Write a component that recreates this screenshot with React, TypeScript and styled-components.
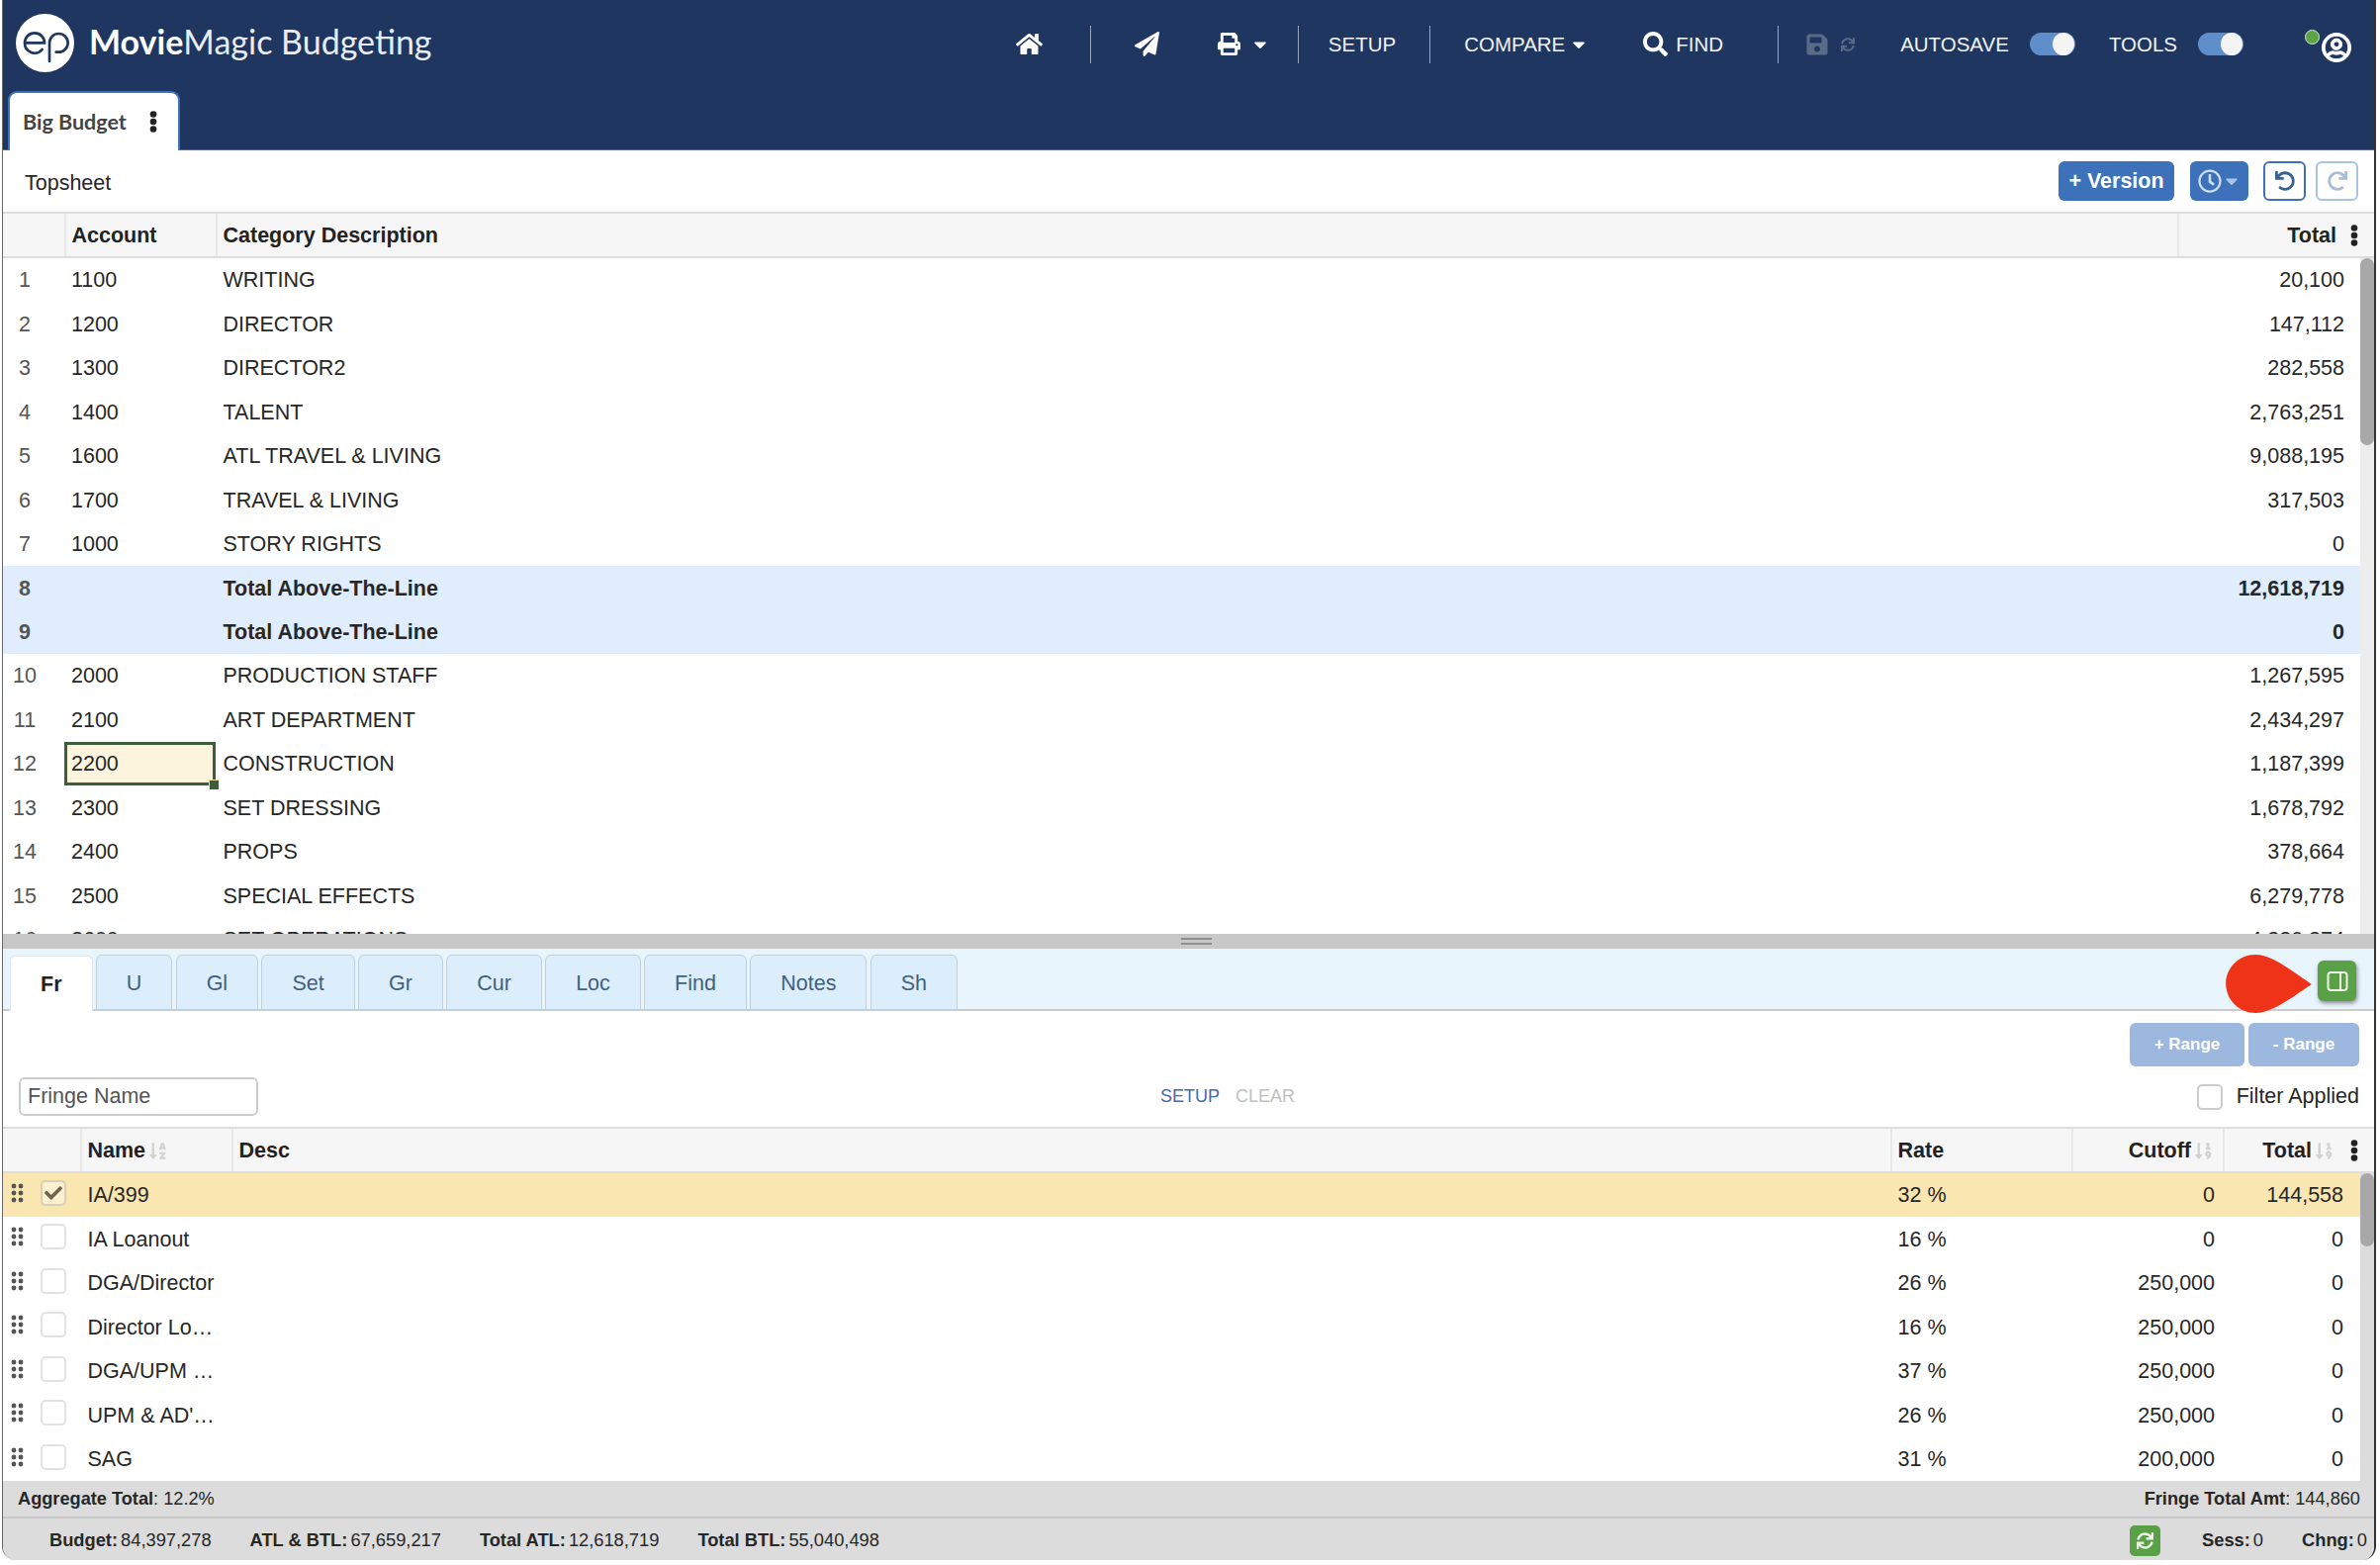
import React from "react"
import styled, { createGlobalStyle } from "styled-components"
import {
  FaCaretDown,
  FaCheck,
  FaHome,
  FaPaperPlane,
  FaPrint,
  FaRedo,
  FaRegClock,
  FaRegUserCircle,
  FaSave,
  FaSearch,
  FaSortAlphaDown,
  FaSortNumericDown,
  FaSync,
  FaUndo,
} from "react-icons/fa"

const GlobalStyle = createGlobalStyle`
  html, body {
    margin: 0;
    padding: 0;
    background: #fff;
    overflow: hidden;
  }
  * {
    box-sizing: border-box;
  }
  body {
    font-family: "Liberation Sans", Arial, sans-serif;
    font-size: 21.5px;
    color: #272727;
  }
`

const Frame = styled.div`
  display: flex;
  flex-direction: column;
  width: 2400px;
  height: 1577px;
  margin-left: 2px;
  border-left: 1px solid #666;
  border-right: 2px solid #333;
  border-radius: 0 0 14px 14px;
  overflow: hidden;
`

const Header = styled.header`
  display: flex;
  flex-direction: column;
  height: 152px;
  flex: none;
  background: #1f3660;
  border-bottom: 1px solid #4d6a96;
`

const TopRow = styled.div`
  display: flex;
  align-items: center;
  height: 91px;
  padding: 0 23px 2px 13px;
  color: #fff;
`

const LogoMark = styled.svg`
  width: 59px;
  height: 59px;
  flex: none;
  margin-bottom: 2px;
`

const Wordmark = styled.div`
  margin: 0 0 6px 15px;
  font-family: Lato, sans-serif;
  font-size: 34px;
  color: #e9edf3;
  b {
    font-weight: 700;
    color: #fff;
  }
`

const Nav = styled.nav`
  display: flex;
  align-items: center;
  margin-left: auto;
`

const NavIcon = styled.span<{ $ml: number; $size: number; $dim?: boolean }>`
  display: flex;
  margin-left: ${(p) => p.$ml}px;
  font-size: ${(p) => p.$size}px;
  color: ${(p) => (p.$dim ? "#5a6b88" : "#fff")};
`

const NavText = styled.span<{ $ml: number }>`
  margin-left: ${(p) => p.$ml}px;
  font-size: 20.5px;
  color: #f1f3f6;
`

const NavSep = styled.span<{ $ml: number }>`
  width: 1px;
  height: 38px;
  margin-left: ${(p) => p.$ml}px;
  background: #9aa6ba;
`

const Toggle = styled.span<{ $ml: number }>`
  display: flex;
  justify-content: flex-end;
  width: 46px;
  height: 23px;
  margin-left: ${(p) => p.$ml}px;
  padding: 0 1px;
  border-radius: 12px;
  background: #5f8fcb;
  &::after {
    content: "";
    width: 22px;
    height: 23px;
    border-radius: 50%;
    background: #f4f4f4;
  }
`

const StatusDot = styled.span`
  width: 15px;
  height: 15px;
  margin: -14px 0 0 62px;
  border-radius: 50%;
  background: #5aa447;
  border: 1px solid #d8e6d4;
`

const Avatar = styled.span`
  display: flex;
  margin: 6px 0 0 2px;
  font-size: 30px;
  color: #fff;
  svg {
    stroke: #fff;
    stroke-width: 16;
  }
`

const TabRow = styled.div`
  display: flex;
  flex: 1;
  align-items: flex-end;
  padding-left: 5px;
`

const BudgetTab = styled.div`
  display: flex;
  align-items: center;
  width: 174px;
  height: 60px;
  padding: 0 21px 0 13px;
  justify-content: space-between;
  margin-bottom: -1px;
  background: #fff;
  border: 2px solid #3d72ba;
  border-bottom: 0;
  border-radius: 9px 9px 0 0;
  font-family: Lato, sans-serif;
  font-size: 21.5px;
  font-weight: 700;
  color: #444;
`

const Dots = styled.svg`
  width: 8px;
  height: 22px;
  flex: none;
  fill: #222;
`

const Kebab = () => (
  <Dots viewBox="0 0 8 22">
    <circle cx="4" cy="3.5" r="3.3" />
    <circle cx="4" cy="11" r="3.3" />
    <circle cx="4" cy="18.5" r="3.3" />
  </Dots>
)

const TitleBar = styled.div`
  display: flex;
  align-items: center;
  height: 62px;
  flex: none;
  padding: 0 16px 0 22px;
`

const TitleText = styled.span`
  margin-top: 5px;
  margin-right: auto;
`

const SolidButton = styled.span<{ $width: number; $ml?: number }>`
  display: flex;
  align-items: center;
  justify-content: center;
  width: ${(p) => p.$width}px;
  height: 40px;
  margin-left: ${(p) => p.$ml || 0}px;
  border-radius: 6px;
  background: #3d72ba;
  color: #fff;
  font-weight: 700;
  font-size: 21.5px;
`

const CaretSoft = styled.span`
  display: flex;
  font-size: 20px;
  color: #a9c4e6;
`

const OutlineButton = styled.span<{ $faded?: boolean; $ml: number }>`
  display: flex;
  align-items: center;
  justify-content: center;
  width: 43px;
  height: 40px;
  margin-left: ${(p) => p.$ml}px;
  border: 2px solid ${(p) => (p.$faded ? "#a7c3e5" : "#3d72ba")};
  border-radius: 6px;
  font-size: 20px;
  color: ${(p) => (p.$faded ? "#a9bdd4" : "#3a6290")};
`

const HeadRow = styled.div<{ $cols: string }>`
  display: grid;
  grid-template-columns: ${(p) => p.$cols};
  height: 47px;
  flex: none;
  background: #f6f6f6;
  border-top: 2px solid #ddd;
  border-bottom: 2px solid #ddd;
  font-weight: 700;
  color: #222;
`

const HeadCell = styled.div<{ $end?: boolean; $pr?: number }>`
  display: flex;
  align-items: center;
  justify-content: ${(p) => (p.$end ? "flex-end" : "flex-start")};
  padding: 2px ${(p) => p.$pr || 0}px 0 ${(p) => (p.$end ? 0 : 5.5)}px;
  border-left: 2px solid #e8e8e8;
  &:first-child {
    border-left: 0;
  }
`

const SortIcon = styled.span`
  display: flex;
  margin-left: 3px;
  font-size: 19px;
  color: #d2d2d2;
`

const KebabGap = styled.span<{ $ml: number }>`
  display: flex;
  margin: -2px 0 0 ${(p) => p.$ml}px;
`

const GridBody = styled.div<{ $height: number }>`
  display: flex;
  height: ${(p) => p.$height}px;
  flex: none;
  overflow: hidden;
`

const Rows = styled.div`
  flex: 1;
  min-width: 0;
`

const ScrollTrack = styled.div<{ $bg: string }>`
  width: 14px;
  flex: none;
  background: ${(p) => p.$bg};
`

const ScrollThumb = styled.div<{ $height: number }>`
  height: ${(p) => p.$height}px;
  border-radius: 7px;
  background: #a8a8a8;
`

const TopRowGrid = styled.div<{ $total?: boolean }>`
  display: grid;
  grid-template-columns: 62px 153px 1fr 183px;
  align-items: center;
  height: 44.44px;
  padding-top: 1.5px;
  background: ${(p) => (p.$total ? "#e0edfc" : "#fff")};
  font-weight: ${(p) => (p.$total ? 700 : 400)};
`

const IndexCell = styled.div`
  padding-right: 18px;
  text-align: center;
  color: #555;
`

const AccountCell = styled.div<{ $selected?: boolean }>`
  position: relative;
  display: flex;
  align-items: center;
  height: 44px;
  margin-top: -1.5px;
  padding: 1.5px 0 0 ${(p) => (p.$selected ? 4 : 7)}px;
  background: ${(p) => (p.$selected ? "#fdf4dd" : "transparent")};
  border: ${(p) => (p.$selected ? "3px solid #3b5f3b" : "0")};
`

const FillHandle = styled.span`
  position: absolute;
  right: -6px;
  bottom: -7px;
  width: 10px;
  height: 10px;
  background: #3b5f3b;
  border-left: 1px solid #f3dca0;
  border-top: 1px solid #f3dca0;
`

const TextCell = styled.div`
  padding-left: 7.5px;
`

const AmountCell = styled.div<{ $pr: number }>`
  padding-right: ${(p) => p.$pr}px;
  text-align: right;
`

const Splitter = styled.div`
  display: flex;
  flex-direction: column;
  align-items: center;
  gap: 3px;
  height: 15px;
  flex: none;
  padding: 4px 0 0 16px;
  background: #c8c8c8;
  &::before,
  &::after {
    content: "";
    width: 31px;
    height: 2px;
    background: #8f8f8f;
  }
`

const TabBar = styled.div`
  position: relative;
  display: flex;
  align-items: flex-end;
  gap: 3.3px;
  height: 63px;
  flex: none;
  padding: 0 18px 0 7px;
  background: #e9f5fc;
  border-bottom: 2px solid #ccc;
`

const PanelTab = styled.div<{ $active?: boolean }>`
  display: flex;
  align-items: center;
  height: 56px;
  margin-bottom: ${(p) => (p.$active ? -2 : -1)}px;
  padding: 2px 30px 0;
  background: ${(p) => (p.$active ? "#fff" : "#dceefc")};
  border: 1px solid ${(p) => (p.$active ? "#dfe8ee" : "#bcd0e0")};
  border-bottom: ${(p) => (p.$active ? "0" : "1px solid #bcd0e0")};
  border-radius: 6px 6px 0 0;
  font-weight: ${(p) => (p.$active ? 700 : 400)};
  color: ${(p) => (p.$active ? "#222" : "#41617f")};
`

const PanelToggle = styled.span`
  display: flex;
  align-items: center;
  justify-content: center;
  align-self: center;
  width: 39px;
  height: 41px;
  margin: 4px 0 0 auto;
  border-radius: 6px;
  background: #5aa047;
  box-shadow: 1px 2px 4px rgba(0, 0, 0, 0.45);
`

const PanelGlyph = styled.svg`
  width: 22px;
  height: 22px;
  fill: none;
  stroke: #eef6ea;
  stroke-width: 2;
`

const Pointer = styled.svg`
  position: absolute;
  left: 2247px;
  top: 6px;
  width: 87px;
  height: 59px;
  fill: #ee3319;
`

const FilterPanel = styled.div`
  display: flex;
  flex-direction: column;
  height: 117px;
  flex: none;
  padding: 12px 15px 0 16px;
`

const RangeRow = styled.div`
  display: flex;
  justify-content: flex-end;
  gap: 4px;
`

const RangeButton = styled.span<{ $width: number }>`
  display: flex;
  align-items: center;
  justify-content: center;
  width: ${(p) => p.$width}px;
  height: 44px;
  border-radius: 6px;
  background: #9db8de;
  color: #fff;
  font-size: 17px;
  font-weight: 700;
`

const FilterRow = styled.div`
  display: grid;
  grid-template-columns: 1154px auto 1fr;
  align-items: center;
  margin-top: 11px;
`

const NameInput = styled.input`
  width: 242px;
  height: 39px;
  padding: 0 7px;
  border: 2px solid #ccc;
  border-radius: 6px;
  background: #fff;
  font-family: inherit;
  font-size: 21.5px;
  outline: none;
  &::placeholder {
    color: #555;
    opacity: 1;
  }
`

const FilterLinks = styled.div`
  display: flex;
  gap: 16px;
  font-size: 18px;
`

const FilterLink = styled.span<{ $muted?: boolean }>`
  color: ${(p) => (p.$muted ? "#c0c0c0" : "#3d6cb0")};
`

const FilterApplied = styled.label`
  display: flex;
  align-items: center;
  justify-content: flex-end;
  gap: 14px;
`

const Check = styled.span<{ $on?: boolean; $border?: string }>`
  display: flex;
  align-items: center;
  justify-content: center;
  width: 26px;
  height: 26px;
  flex: none;
  border: 2px solid ${(p) => p.$border || "#e2e2e2"};
  border-radius: 5px;
  background: ${(p) => (p.$on ? "#fbf0d0" : "#fff")};
  font-size: 18px;
  color: #6b6450;
`

const FringeGrid = styled.div<{ $on?: boolean }>`
  display: grid;
  grid-template-columns: 78px 153px 1677px 183px 153px 138px;
  align-items: center;
  height: 44.44px;
  padding-top: 1.5px;
  background: ${(p) => (p.$on ? "#fae6b0" : "#fff")};
`

const HandleCell = styled.div`
  display: flex;
  align-items: center;
  gap: 17px;
  padding: 0 0 6px 8px;
`

const Grip = styled.svg`
  width: 13px;
  height: 20px;
  flex: none;
  fill: #555;
`

const DragGrip = () => (
  <Grip viewBox="0 0 13 20">
    {[3, 10, 17].map((cy) => (
      <React.Fragment key={cy}>
        <circle cx="3" cy={cy} r="2.4" />
        <circle cx="10" cy={cy} r="2.4" />
      </React.Fragment>
    ))}
  </Grip>
)

const Totals = styled.div`
  display: flex;
  align-items: center;
  justify-content: space-between;
  height: 38px;
  flex: none;
  padding: 0 14px 0 15px;
  background: #dcdcdc;
  border-bottom: 2px solid #c8c8c8;
  font-size: 18.2px;
`

const StatusBar = styled.div`
  display: flex;
  align-items: center;
  height: 42px;
  flex: none;
  padding: 2px 7px 0 47px;
  background: #dcdcdc;
  font-size: 18.3px;
`

const Stat = styled.span<{ $ml?: number }>`
  margin-left: ${(p) => p.$ml || 0}px;
  b {
    margin-right: 3px;
  }
`

const SyncButton = styled.span`
  display: flex;
  align-items: center;
  justify-content: center;
  width: 31px;
  height: 31px;
  margin-left: auto;
  border-radius: 5px;
  background: #5aa047;
  color: #eef6ea;
  font-size: 17px;
`

const topRows = [
  ["1", "1100", "WRITING", "20,100"],
  ["2", "1200", "DIRECTOR", "147,112"],
  ["3", "1300", "DIRECTOR2", "282,558"],
  ["4", "1400", "TALENT", "2,763,251"],
  ["5", "1600", "ATL TRAVEL & LIVING", "9,088,195"],
  ["6", "1700", "TRAVEL & LIVING", "317,503"],
  ["7", "1000", "STORY RIGHTS", "0"],
  ["8", "", "Total Above-The-Line", "12,618,719"],
  ["9", "", "Total Above-The-Line", "0"],
  ["10", "2000", "PRODUCTION STAFF", "1,267,595"],
  ["11", "2100", "ART DEPARTMENT", "2,434,297"],
  ["12", "2200", "CONSTRUCTION", "1,187,399"],
  ["13", "2300", "SET DRESSING", "1,678,792"],
  ["14", "2400", "PROPS", "378,664"],
  ["15", "2500", "SPECIAL EFFECTS", "6,279,778"],
  ["16", "2600", "SET OPERATIONS", "4,330,374"],
]

const fringes = [
  ["IA/399", "32 %", "0", "144,558"],
  ["IA Loanout", "16 %", "0", "0"],
  ["DGA/Director", "26 %", "250,000", "0"],
  ["Director Lo…", "16 %", "250,000", "0"],
  ["DGA/UPM …", "37 %", "250,000", "0"],
  ["UPM & AD'…", "26 %", "250,000", "0"],
  ["SAG", "31 %", "200,000", "0"],
]

const panelTabs = ["Fr", "U", "Gl", "Set", "Gr", "Cur", "Loc", "Find", "Notes", "Sh"]

export default function App() {
  return (
    <>
      <GlobalStyle />
      <Frame>
        <Header>
          <TopRow>
            <LogoMark viewBox="48 42 177 177">
              <circle cx="136.5" cy="130.5" r="88.5" fill="#fff" />
              <g fill="none" stroke="#1f3660" strokeWidth="8" strokeLinecap="round">
                <path d="M76 130 H135 A30 30 0 0 0 75 130 A30 30 0 0 0 128 150" />
                <path d="M150 186 V130 A28 28 0 1 1 178 158 H170" />
              </g>
            </LogoMark>
            <Wordmark>
              <b>Movie</b>Magic Budgeting
            </Wordmark>
            <Nav>
              <NavIcon $ml={0} $size={27}>
                <FaHome />
              </NavIcon>
              <NavSep $ml={48} />
              <NavIcon $ml={44} $size={25}>
                <FaPaperPlane />
              </NavIcon>
              <NavIcon $ml={59} $size={23}>
                <FaPrint />
              </NavIcon>
              <NavIcon $ml={10} $size={20}>
                <FaCaretDown />
              </NavIcon>
              <NavSep $ml={28} />
              <NavText $ml={30}>SETUP</NavText>
              <NavSep $ml={34} />
              <NavText $ml={34}>COMPARE</NavText>
              <NavIcon $ml={4} $size={20}>
                <FaCaretDown />
              </NavIcon>
              <NavIcon $ml={55} $size={25}>
                <FaSearch />
              </NavIcon>
              <NavText $ml={8}>FIND</NavText>
              <NavSep $ml={55} />
              <NavIcon $ml={27} $size={24} $dim>
                <FaSave />
              </NavIcon>
              <NavIcon $ml={12} $size={14} $dim>
                <FaSync />
              </NavIcon>
              <NavText $ml={46}>AUTOSAVE</NavText>
              <Toggle $ml={21} />
              <NavText $ml={34}>TOOLS</NavText>
              <Toggle $ml={21} />
              <StatusDot />
              <Avatar>
                <FaRegUserCircle />
              </Avatar>
            </Nav>
          </TopRow>
          <TabRow>
            <BudgetTab>
              Big Budget
              <Kebab />
            </BudgetTab>
          </TabRow>
        </Header>

        <TitleBar>
          <TitleText>Topsheet</TitleText>
          <SolidButton $width={117}>+ Version</SolidButton>
          <SolidButton $width={59} $ml={16}>
            <FaRegClock color="#cfe0f4" size={24} />
            <CaretSoft>
              <FaCaretDown />
            </CaretSoft>
          </SolidButton>
          <OutlineButton $ml={15}>
            <FaUndo />
          </OutlineButton>
          <OutlineButton $ml={10} $faded>
            <FaRedo />
          </OutlineButton>
        </TitleBar>

        <HeadRow $cols="62px 153px 1fr 199px">
          <HeadCell />
          <HeadCell>Account</HeadCell>
          <HeadCell>Category Description</HeadCell>
          <HeadCell $end $pr={16}>
            Total
            <KebabGap $ml={14}>
              <Kebab />
            </KebabGap>
          </HeadCell>
        </HeadRow>

        <GridBody $height={683}>
          <Rows>
            {topRows.map(([index, account, name, total]) => (
              <TopRowGrid key={index} $total={account === ""}>
                <IndexCell>{index}</IndexCell>
                <AccountCell $selected={account === "2200"}>
                  {account}
                  {account === "2200" && <FillHandle />}
                </AccountCell>
                <TextCell>{name}</TextCell>
                <AmountCell $pr={16}>{total}</AmountCell>
              </TopRowGrid>
            ))}
          </Rows>
          <ScrollTrack $bg="#ededed">
            <ScrollThumb $height={189} />
          </ScrollTrack>
        </GridBody>

        <Splitter />

        <TabBar>
          {panelTabs.map((tab, i) => (
            <PanelTab key={tab} $active={i === 0}>
              {tab}
            </PanelTab>
          ))}
          <PanelToggle>
            <PanelGlyph viewBox="0 0 22 22">
              <rect x="1.5" y="2" width="19" height="18" rx="3" />
              <path d="M14 2 V20" />
            </PanelGlyph>
          </PanelToggle>
          <Pointer viewBox="750 105 260 177">
            <path d="M1010 195 C950 155 890 105 840 105 C790 105 750 145 750 193 C750 242 790 282 840 282 C890 282 950 235 1010 195 Z" />
          </Pointer>
        </TabBar>

        <FilterPanel>
          <RangeRow>
            <RangeButton $width={116}>+ Range</RangeButton>
            <RangeButton $width={112}>- Range</RangeButton>
          </RangeRow>
          <FilterRow>
            <NameInput placeholder="Fringe Name" />
            <FilterLinks>
              <FilterLink>SETUP</FilterLink>
              <FilterLink $muted>CLEAR</FilterLink>
            </FilterLinks>
            <FilterApplied>
              <Check $border="#ccc" />
              Filter Applied
            </FilterApplied>
          </FilterRow>
        </FilterPanel>

        <HeadRow $cols="78px 153px 1677px 183px 153px 1fr">
          <HeadCell />
          <HeadCell>
            Name
            <SortIcon>
              <FaSortAlphaDown />
            </SortIcon>
          </HeadCell>
          <HeadCell>Desc</HeadCell>
          <HeadCell>Rate</HeadCell>
          <HeadCell $end $pr={10}>
            Cutoff
            <SortIcon>
              <FaSortNumericDown />
            </SortIcon>
          </HeadCell>
          <HeadCell $end $pr={16}>
            Total
            <SortIcon>
              <FaSortNumericDown />
            </SortIcon>
            <KebabGap $ml={17}>
              <Kebab />
            </KebabGap>
          </HeadCell>
        </HeadRow>

        <GridBody $height={311}>
          <Rows>
            {fringes.map(([name, rate, cutoff, total], i) => (
              <FringeGrid key={name} $on={i === 0}>
                <HandleCell>
                  <DragGrip />
                  <Check $on={i === 0} $border={i === 0 ? "#d8cfb4" : undefined}>
                    {i === 0 && <FaCheck />}
                  </Check>
                </HandleCell>
                <TextCell>{name}</TextCell>
                <div />
                <TextCell>{rate}</TextCell>
                <AmountCell $pr={8}>{cutoff}</AmountCell>
                <AmountCell $pr={16}>{total}</AmountCell>
              </FringeGrid>
            ))}
          </Rows>
          <ScrollTrack $bg="#dcdcdc">
            <ScrollThumb $height={74} />
          </ScrollTrack>
        </GridBody>

        <Totals>
          <span>
            <b>Aggregate Total</b>: 12.2%
          </span>
          <span>
            <b>Fringe Total Amt</b>: 144,860
          </span>
        </Totals>

        <StatusBar>
          <Stat>
            <b>Budget:</b>84,397,278
          </Stat>
          <Stat $ml={39}>
            <b>ATL &amp; BTL:</b>67,659,217
          </Stat>
          <Stat $ml={39}>
            <b>Total ATL:</b>12,618,719
          </Stat>
          <Stat $ml={39}>
            <b>Total BTL:</b>55,040,498
          </Stat>
          <SyncButton>
            <FaSync />
          </SyncButton>
          <Stat $ml={42}>
            <b>Sess:</b>0
          </Stat>
          <Stat $ml={39}>
            <b>Chng:</b>0
          </Stat>
        </StatusBar>
      </Frame>
    </>
  )
}
